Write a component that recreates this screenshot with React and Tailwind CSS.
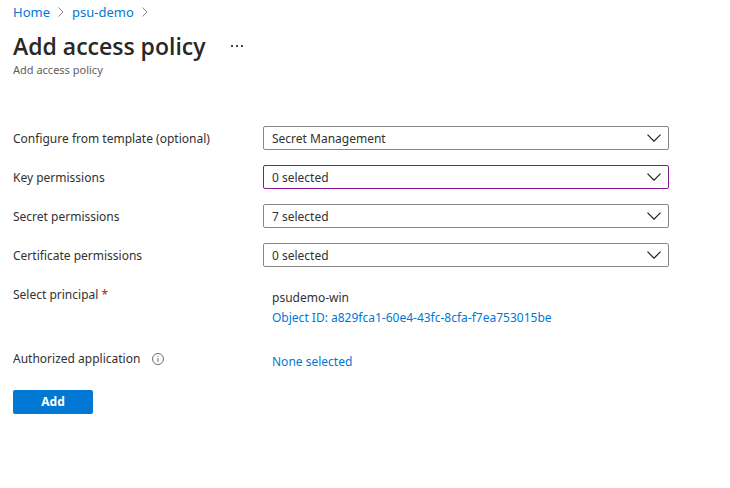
import React from "react";

function BreadcrumbArrow() {
  return (
    <svg className="h-[10px] w-[6px]" viewBox="0 0 6 10" fill="none" stroke="#8a8886" aria-hidden="true">
      <path d="M.5.5 5 5 .5 9.5" />
    </svg>
  );
}

function Breadcrumbs() {
  return (
    <nav aria-label="Breadcrumb" className="flex h-5 items-center gap-2 text-[13px] leading-5 text-[#0078d4]">
      <a href="#home">Home</a>
      <BreadcrumbArrow />
      <a href="#psu-demo">psu-demo</a>
      <BreadcrumbArrow />
    </nav>
  );
}

const fields = [
  { id: "template", label: "Configure from template (optional)", value: "Secret Management", border: "border-[#8a8886]" },
  { id: "key", label: "Key permissions", value: "0 selected", border: "border-[#881798]" },
  { id: "secret", label: "Secret permissions", value: "7 selected", border: "border-[#8a8886]" },
  { id: "certificate", label: "Certificate permissions", value: "0 selected", border: "border-[#8a8886]" },
];

function SelectField({ id, label, value, border }) {
  return (
    <div className="flex items-center">
      <label htmlFor={id} className="w-[250px] shrink-0 pt-[2px]">
        {label}
      </label>
      <div className="grid min-w-0 flex-1 items-center">
        <select
          id={id}
          defaultValue={value}
          className={`col-start-1 row-start-1 h-6 w-full appearance-none rounded-xs border bg-white px-2 pt-[2px] text-xs leading-5 ${border}`}
        >
          <option>{value}</option>
        </select>
        <svg
          className="pointer-events-none col-start-1 row-start-1 mr-2 h-2 w-[14px] justify-self-end"
          viewBox="0 0 14 8"
          fill="none"
          stroke="#201f1e"
          strokeWidth="1.2"
          aria-hidden="true"
        >
          <path d="M.5.7 7 7.2 13.5.7" />
        </svg>
      </div>
    </div>
  );
}

export default function App() {
  return (
    <main className="min-h-screen bg-white px-[13px] pt-[2px] font-['Noto_Sans','Open_Sans',sans-serif] text-xs leading-5 text-[#323130]">
      <Breadcrumbs />
      <header className="pt-2">
        <div className="flex h-8 items-center gap-[25px]">
          <h1 className="font-['Open_Sans','Noto_Sans',sans-serif] text-[23px] font-semibold text-[#292827]">
            Add access policy
          </h1>
          <button type="button" aria-label="More actions" className="flex h-5 items-center">
            <svg className="h-[2px] w-3" viewBox="0 0 12 2" fill="#484644" aria-hidden="true">
              <path d="M0 0h2v2H0zM5 0h2v2H5zM10 0h2v2h-2z" />
            </svg>
          </button>
        </div>
        <p className="text-[11px] leading-4 text-[#605e5c]">Add access policy</p>
      </header>

      <form className="max-w-[656px] pt-12" onSubmit={(e) => e.preventDefault()}>
        <div className="flex flex-col gap-[15px]">
          {fields.map((field) => (
            <SelectField key={field.id} {...field} />
          ))}
        </div>

        <div className="flex pt-[18px]">
          <div className="w-[250px] shrink-0">
            Select principal <span className="text-[#a4262c]">*</span>
          </div>
          <div className="px-[9px] pt-[3px]">
            <p>psudemo-win</p>
            <a href="#principal" className="block text-[#0078d4]">
              Object ID: a829fca1-60e4-43fc-8cfa-f7ea753015be
            </a>
          </div>
        </div>

        <div className="flex pt-[21px]">
          <div className="flex h-5 w-[250px] shrink-0 items-center gap-3">
            <span>Authorized application</span>
            <svg className="h-3 w-3" viewBox="0 0 12 12" fill="none" stroke="#605e5c" strokeWidth="0.9" role="img" aria-label="Information">
              <circle cx="6" cy="6" r="5.5" />
              <path d="M6 5v4M6 3v1" />
            </svg>
          </div>
          <div className="px-[9px] pt-[3px]">
            <a href="#application" className="text-[#0078d4]">
              None selected
            </a>
          </div>
        </div>

        <button type="submit" className="mt-[18px] block h-6 w-20 rounded-xs bg-[#0078d4] text-xs leading-5 font-bold text-white">
          Add
        </button>
      </form>
    </main>
  );
}
